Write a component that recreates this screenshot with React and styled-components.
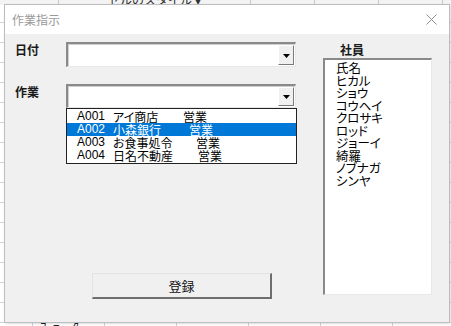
import React from "react";
import styled, { createGlobalStyle } from "styled-components";

const works = [
  { code: "A001", name: "アイ商店", kind: "営業", pad: 116 },
  { code: "A002", name: "小森銀行", kind: "営業", pad: 122 },
  { code: "A003", name: "お食事処令", kind: "営業", pad: 129 },
  { code: "A004", name: "日名不動産", kind: "営業", pad: 131 },
];

const staff = ["氏名", "ヒカル", "ショウ", "コウヘイ", "クロサキ", "ロッド", "ジョーイ", "綺羅", "ノブナガ", "シンヤ"];

const GlobalStyle = createGlobalStyle`
  html, body {
    margin: 0;
    padding: 0;
  }
  body {
    width: 451px;
    height: 326px;
    overflow: hidden;
    font-family: "Liberation Sans", "Noto Sans CJK JP", sans-serif;
  }
`;

const ArrowIcon = () => (
  <svg width="7" height="4" viewBox="0 0 7 4">
    <path d="M0 0 H7 L3.5 4 Z" fill="#000" />
  </svg>
);

const Combo = ({ height }) => (
  <ComboBox $h={height}>
    <ComboButton>
      <ArrowIcon />
    </ComboButton>
  </ComboBox>
);

const App = () => {
  return (
    <>
      <GlobalStyle />
      <Desk>
        <Ribbon>
          <RibbonText>セルのスタイル ▾</RibbonText>
        </Ribbon>
        <SheetText>ﾌﾞﾃﾞｰﾀ</SheetText>

        <Dialog>
          <TitleBar>
            <Title>作業指示</Title>
            <CloseIcon width="11" height="11" viewBox="0 0 11 11">
              <path d="M0.5 0.5 L10.5 10.5 M10.5 0.5 L0.5 10.5" stroke="#8d8d8d" strokeWidth="1" />
            </CloseIcon>
          </TitleBar>

          <Body>
            <LeftColumn>
              <FieldRow>
                <Label>日付</Label>
                <Combo height={25} />
              </FieldRow>
              <FieldRow $top={17}>
                <Label>作業</Label>
                <ComboWrap>
                  <Combo height={24} />
                  <DropList>
                    {works.map((w, i) => (
                      <DropItem key={w.code} $active={i === 1}>
                        <Code>{w.code}</Code>
                        <WorkName>{w.name}</WorkName>
                        <Kind style={{ left: w.pad }}>{w.kind}</Kind>
                      </DropItem>
                    ))}
                  </DropList>
                </ComboWrap>
              </FieldRow>
              <SubmitButton>登録</SubmitButton>
            </LeftColumn>

            <RightColumn>
              <Label $indent={17}>社員</Label>
              <ListBox>
                {staff.map((s) => (
                  <ListItem key={s}>{s}</ListItem>
                ))}
              </ListBox>
            </RightColumn>
          </Body>
        </Dialog>
      </Desk>
    </>
  );
};

export default App;

// Styled Components
const Desk = styled.div`
  position: relative;
  width: 451px;
  height: 326px;
  background-color: #ffffff;
  background-image: linear-gradient(90deg, #d4d4d4 1px, transparent 1px),
    linear-gradient(#d4d4d4 1px, transparent 1px);
  background-size: 72px 100%, 100% 20px;
  background-position: 32px 0, 0 2px;
  overflow: hidden;
`;

const Ribbon = styled.div`
  height: 5px;
  background: #f3f3f3;
  background-image: linear-gradient(90deg, #c8c8c8 1px, transparent 1px);
  background-size: 64px 100%;
  background-position: 58px 0;
  position: relative;
`;

const RibbonText = styled.div`
  position: absolute;
  left: 108px;
  top: -9px;
  font-size: 12px;
  color: #333;
`;

const SheetText = styled.div`
  position: absolute;
  left: 40px;
  bottom: -9px;
  font-size: 13px;
  color: #222;
`;

const Dialog = styled.div`
  position: absolute;
  left: 5px;
  top: 5px;
  width: 444px;
  height: 317px;
  display: flex;
  flex-direction: column;
  background: #f0f0f0;
  box-shadow: 0 0 0 1px #bdbdbd, 1px 1px 3px rgba(0, 0, 0, 0.25);
`;

const TitleBar = styled.div`
  height: 29px;
  flex: none;
  background: #ffffff;
  display: flex;
  align-items: center;
  justify-content: space-between;
  padding: 0 12px 0 7px;
`;

const Title = styled.span`
  font-family: "Noto Sans CJK JP", sans-serif;
  font-size: 12px;
  color: #9a9a9a;
`;

const CloseIcon = styled.svg`
  display: block;
`;

const Body = styled.div`
  flex: 1;
  display: grid;
  grid-template-columns: 281px 109px;
  column-gap: 27px;
  padding: 8px 0 23px 10px;
`;

const LeftColumn = styled.div`
  display: flex;
  flex-direction: column;
`;

const RightColumn = styled.div`
  display: flex;
  flex-direction: column;
  padding-bottom: 4px;
`;

const FieldRow = styled.div`
  display: flex;
  align-items: flex-start;
  margin-top: ${(p) => p.$top || 0}px;
`;

const Label = styled.div`
  font-family: "Noto Sans CJK JP", sans-serif;
  font-weight: 700;
  font-size: 12px;
  line-height: 15px;
  color: #1a1a1a;
  width: ${(p) => (p.$indent ? "auto" : "51px")};
  padding-left: ${(p) => p.$indent || 0}px;
  flex: none;
`;

const ComboWrap = styled.div`
  position: relative;
  width: 230px;
`;

const ComboBox = styled.div`
  box-sizing: border-box;
  width: 230px;
  height: ${(p) => p.$h}px;
  background: #fff;
  border-style: solid;
  border-width: 2px 1px 1px 2px;
  border-color: #8a8a8a #e8e8e8 #e8e8e8 #8a8a8a;
  box-shadow: inset 1px 1px 0 #cfcfcf;
  display: flex;
  justify-content: flex-end;
  align-items: stretch;
  padding: 1px 1px 1px 0;
`;

const ComboButton = styled.div`
  box-sizing: border-box;
  width: 16px;
  background: #f0f0f0;
  border-style: solid;
  border-width: 1px;
  border-color: #ffffff #7a7a7a #7a7a7a #ffffff;
  display: flex;
  align-items: flex-end;
  justify-content: center;
  padding-bottom: 6px;
`;

const DropList = styled.div`
  position: absolute;
  left: 0;
  top: 100%;
  box-sizing: border-box;
  width: 231px;
  border: 1px solid #222;
  background: #fff;
  padding: 1px 0;
`;

const DropItem = styled.div`
  position: relative;
  height: 13px;
  display: flex;
  align-items: center;
  padding-left: 10px;
  font-size: 12px;
  line-height: 13px;
  white-space: nowrap;
  background: ${(p) => (p.$active ? "#0078d7" : "transparent")};
  color: ${(p) => (p.$active ? "#ffffff" : "#000000")};
`;

const Code = styled.span`
  width: 36px;
  font-size: 12px;
`;

const WorkName = styled.span`
  font-family: "Noto Sans CJK JP", sans-serif;
  font-feature-settings: "palt";
`;

const Kind = styled.span`
  position: absolute;
  font-family: "Noto Sans CJK JP", sans-serif;
`;

const SubmitButton = styled.button`
  margin-top: auto;
  margin-left: 77px;
  box-sizing: border-box;
  width: 180px;
  height: 26px;
  background: #f0f0f0;
  border-style: solid;
  border-width: 1px 2px 2px 1px;
  border-color: #e3e3e3 #6e6e6e #6e6e6e #e3e3e3;
  font-family: "Noto Sans CJK JP", sans-serif;
  font-size: 13px;
  color: #111;
  padding: 0;
  cursor: pointer;
`;

const ListBox = styled.div`
  margin-top: 1px;
  flex: 1;
  box-sizing: border-box;
  background: #fff;
  border-style: solid;
  border-width: 2px 1px 1px 2px;
  border-color: #8a8a8a #e8e8e8 #e8e8e8 #8a8a8a;
  padding: 2px 0 0 11px;
`;

const ListItem = styled.div`
  font-family: "Noto Sans CJK JP", sans-serif;
  font-feature-settings: "palt";
  font-size: 12.5px;
  line-height: 12.5px;
  color: #000;
  white-space: nowrap;
`;
